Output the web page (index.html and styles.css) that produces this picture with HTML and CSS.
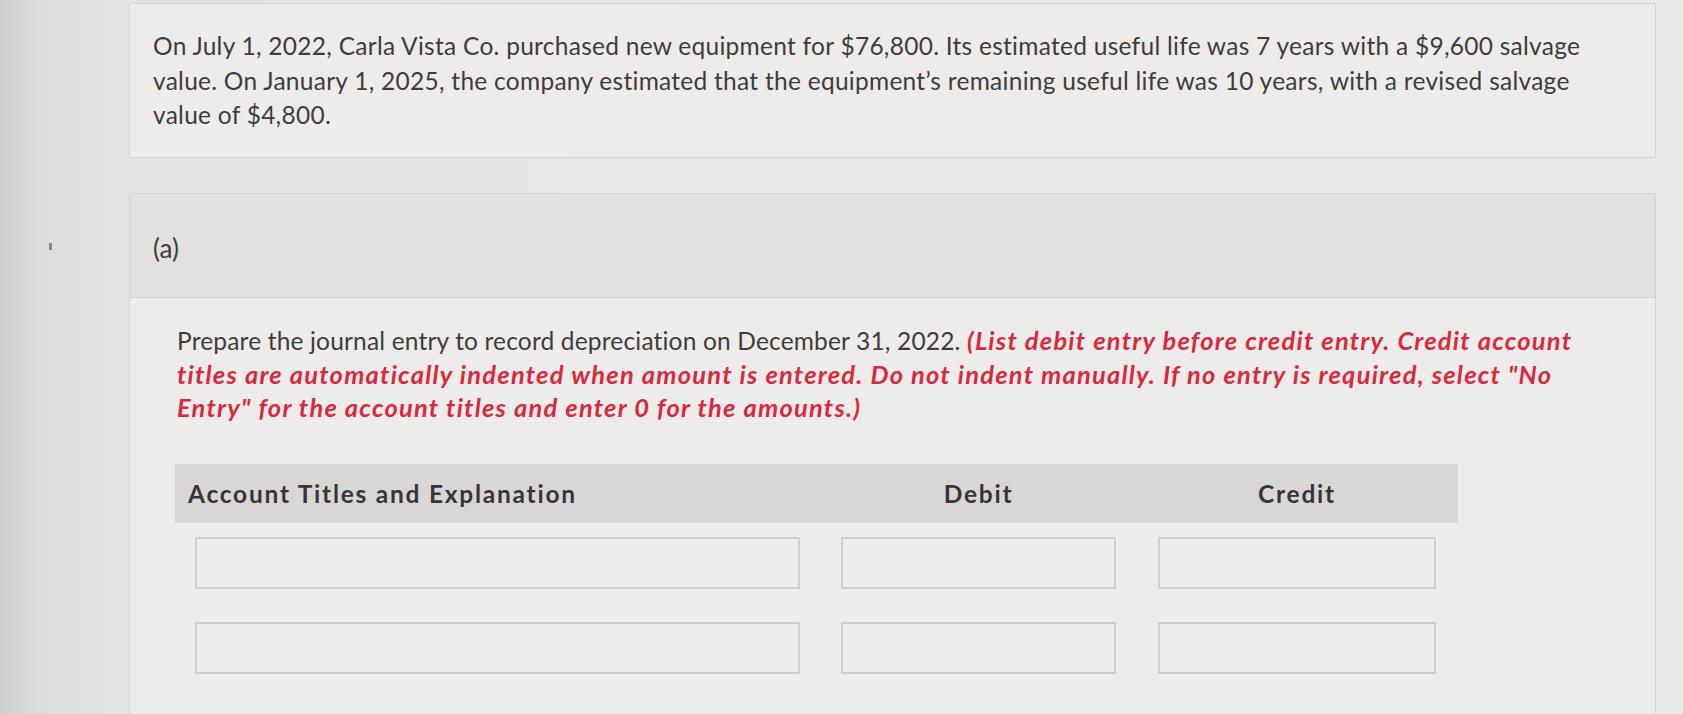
FILE: index.html
```html
<!DOCTYPE html>
<html lang="en">
<head>
<meta charset="utf-8">
<title>Depreciation question</title>
<link rel="stylesheet" href="styles.css">
</head>
<body>
<div class="page">
  <div class="gutter"><span class="speck"></span></div>
  <main class="content">
    <section class="card intro">
      <p>On July 1, 2022, Carla Vista Co. purchased new equipment for $76,800. Its estimated useful life was 7 years with a $9,600 salvage<br>value. On January 1, 2025, the company estimated that the equipment’s remaining useful life was 10 years, with a revised salvage<br>value of $4,800.</p>
    </section>
    <section class="card part">
      <header class="part-head">(a)</header>
      <div class="part-body">
        <p class="prompt">Prepare the journal entry to record depreciation on December 31, 2022. <em>(List debit entry before credit entry. Credit account<br>titles are automatically indented when amount is entered. Do not indent manually. If no entry is required, select "No<br>Entry" for the account titles and enter 0 for the amounts.)</em></p>
        <div class="journal">
          <div class="jhead">
            <div class="col-acct th-acct">Account Titles and Explanation</div>
            <div class="col-amt th-amt">Debit</div>
            <div class="col-amt2 th-amt">Credit</div>
          </div>
          <div class="jrow">
            <div class="col-acct"><input class="field" type="text"></div>
            <div class="col-amt"><input class="field" type="text"></div>
            <div class="col-amt2"><input class="field" type="text"></div>
          </div>
          <div class="jrow">
            <div class="col-acct"><input class="field" type="text"></div>
            <div class="col-amt"><input class="field" type="text"></div>
            <div class="col-amt2"><input class="field" type="text"></div>
          </div>
        </div>
      </div>
    </section>
  </main>
</div>
</body>
</html>
```
FILE: styles.css
```css
html, body {
  margin: 0;
  padding: 0;
  height: 100%;
  overflow: hidden;
}
body {
  background: #e6e5e3;
  font-family: Lato, "Open Sans", "Liberation Sans", sans-serif;
  color: #3d3c3d;
}
.page {
  display: flex;
  min-height: 714px;
  background: linear-gradient(90deg, #cfcecc 0px, #dedddb 40px, #e4e3e1 129px, #e9e8e6 700px, #eceae8 1683px);
}
.gutter {
  width: 129px;
  flex: none;
  position: relative;
}
.speck {
  position: absolute;
  left: 49px;
  top: 243px;
  width: 3px;
  height: 7px;
  background: #8b8a88;
}
.content {
  width: 1527px;
  flex: none;
  padding-top: 3px;
  display: flex;
  flex-direction: column;
  gap: 35px;
}
.card {
  border: 1px solid #d4d3d1;
  background: #edecea;
  border-radius: 2px;
}
.intro {
  height: 155px;
  box-sizing: border-box;
  padding: 25px 20px 0 23px;
}
.intro p {
  margin: 0;
  font-size: 24.5px;
  line-height: 34.5px;
  letter-spacing: 0.27px;
  white-space: nowrap;
}
.part {
  border-bottom: none;
  flex: 1;
}
.part-head {
  height: 104px;
  background: #e2e1df;
  border-bottom: 1px solid #d3d2d0;
  display: flex;
  align-items: center;
  padding-left: 23px;
  font-size: 26px;
  padding-top: 4px;
  box-sizing: border-box;
}
.part-body {
  padding: 26px 20px 0 47px;
}
.prompt {
  margin: 0;
  font-size: 24.5px;
  line-height: 33.5px;
  letter-spacing: 0.17px;
  white-space: nowrap;
}
.prompt em {
  color: #d62a40;
  font-weight: 700;
  font-style: italic;
  font-size: 25.5px;
  letter-spacing: 1.22px;
}
.journal {
  margin-top: 39px;
  width: 1283px;
  margin-left: -2px;
}
.jhead {
  display: flex;
  height: 59px;
  align-items: center;
  background: #d8d7d5;
  font-weight: 700;
  font-size: 24.5px;
  letter-spacing: 1.75px;
  color: #37353a;
}
.col-acct { width: 645px; box-sizing: border-box; padding: 0 20px; }
.col-amt { width: 317px; box-sizing: border-box; padding: 0 21px; }
.col-amt2 { width: 321px; box-sizing: border-box; padding: 0 22px 0 21px; }
.th-acct { padding-left: 13px; }
.th-amt { text-align: center; }
.jrow {
  display: flex;
  margin-top: 14px;
}
.jrow + .jrow { margin-top: 33px; }
.field {
  display: block;
  width: 100%;
  height: 52px;
  box-sizing: border-box;
  border: 2px solid #cfcecc;
  background: #edecea;
  border-radius: 1px;
  outline: none;
  font: inherit;
}
```
